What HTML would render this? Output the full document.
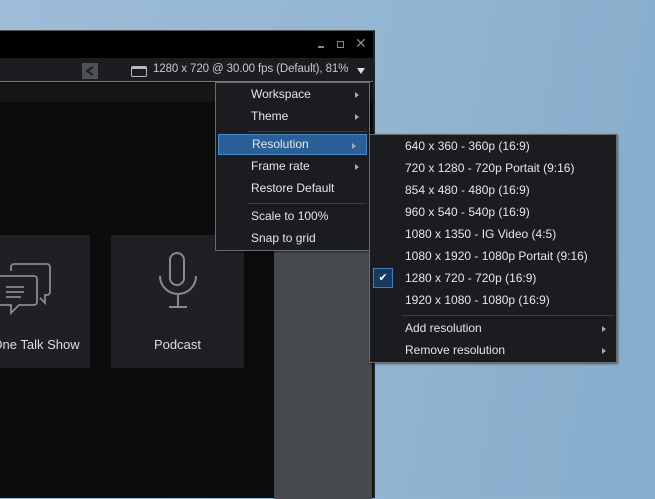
<!DOCTYPE html>
<html><head><style>
*{margin:0;padding:0;box-sizing:border-box}
body{width:655px;height:498px;overflow:hidden;position:relative;background:linear-gradient(100deg,#9dbcd8 0%,#93b6d3 50%,#86adcc 100%);font-family:"Liberation Sans",sans-serif;color:#e6e6e6}
.abs{position:absolute}
.win{left:0;top:30px;width:375px;height:468px;background:#0c0c0d;border-top:1px solid #555;border-right:2px solid #222}
.menu{background:#1b1c1f;border:1px solid #6b6b6b;font-size:12px;box-shadow:1px 1px 2px rgba(0,0,0,.5)}
.it{position:absolute;left:0;right:0;height:22px;line-height:20px}
.arr{position:absolute;right:10px;top:8px;width:0;height:0;border-left:4px solid #aaa;border-top:3.5px solid transparent;border-bottom:3.5px solid transparent}
.sep{position:absolute;height:1px;background:#3c3d40}
</style></head><body>
<div class="abs win">
  <div class="abs" style="left:0;top:0;width:373px;height:27px;background:#000"></div>
  <div class="abs" style="left:318px;top:15px;width:6px;height:2px;background:#888"></div>
  <div class="abs" style="left:337px;top:10px;width:7px;height:7px;border:1.5px solid #888"></div>
  <div class="abs" style="left:355px;top:4px;color:#888;font-size:14px">✕</div>
  <div class="abs" style="left:0;top:27px;width:373px;height:24px;background:#1c1d20;border-bottom:1px solid #4a88c0"></div>
  <div class="abs" style="left:82px;top:32px;width:16px;height:16px;background:#4e5257"></div>
  <svg class="abs" style="left:82px;top:32px" width="16" height="16"><path d="M11 4L5 8L11 12" stroke="#1c1d20" stroke-width="2" fill="none"/></svg>
  <div class="abs" style="left:131px;top:35px;width:16px;height:11px;border:1.5px solid #bbb;border-top-width:3px;border-radius:2px"></div>
  <div class="abs" style="left:153px;top:32px;font-size:11.5px;color:#c8c8c8;letter-spacing:-0.1px">1280 x 720 @ 30.00 fps (Default), 81%</div>
  <div class="abs" style="left:357px;top:37px;border-top:6px solid #ddd;border-left:4px solid transparent;border-right:4px solid transparent"></div>
  <div class="abs" style="left:0;top:52px;width:373px;height:19px;background:#161617"></div>
  <div class="abs" style="left:0;top:204px;width:90px;height:133px;background:#1e2024"></div>
  <div class="abs" style="left:111px;top:204px;width:133px;height:133px;background:#1e2024"></div>
  <svg class="abs" style="left:0;top:220px" width="60" height="70" fill="none" stroke="#8a8a8a" stroke-width="1.8"><path d="M11 20V16a3 3 0 0 1 3-3h33a3 3 0 0 1 3 3v25a3 3 0 0 1-3 3h-2v8l-5-5"/><path d="M0 25h34a3 3 0 0 1 3 3v23a3 3 0 0 1-3 3H19l-8 8v-8H0"/><path d="M6 36h18M6 41h18M6 46h15"/></svg>
  <div class="abs" style="left:-20px;top:306px;width:112px;text-align:center;font-size:13px;color:#ddd">One Talk Show</div>
  <svg class="abs" style="left:156px;top:219px" width="44" height="64" fill="none" stroke="#8a8a8a" stroke-width="2"><rect x="14" y="3" width="14" height="32" rx="7"/><path d="M4 26a18 18 0 0 0 36 0M22 44v13M13 57h18"/></svg>
  <div class="abs" style="left:111px;top:306px;width:133px;text-align:center;font-size:13px;color:#ddd">Podcast</div>
  <div class="abs" style="left:274px;top:170px;width:98px;height:298px;background:#46494d"></div>
</div>
<div class="abs menu" style="left:215px;top:82px;width:155px;height:169px">
  <div class="it" style="top:1px;padding-left:35px">Workspace<span class="arr"></span></div>
  <div class="it" style="top:23px;padding-left:35px">Theme<span class="arr"></span></div>
  <div class="sep" style="left:32px;right:2px;top:48px"></div>
  <div class="it" style="top:51px;left:2px;right:2px;height:21px;line-height:19px;background:#2a6097;border:1px solid #4a88c8;padding-left:33px">Resolution<span class="arr"></span></div>
  <div class="it" style="top:73px;padding-left:35px">Frame rate<span class="arr"></span></div>
  <div class="it" style="top:95px;padding-left:35px">Restore Default</div>
  <div class="sep" style="left:32px;right:2px;top:120px"></div>
  <div class="it" style="top:123px;padding-left:35px">Scale to 100%</div>
  <div class="it" style="top:145px;padding-left:35px">Snap to grid</div>
</div>
<div class="abs menu" style="left:369px;top:134px;width:248px;height:229px">
  <div class="it" style="top:1px;padding-left:35px">640 x 360 - 360p (16:9)</div>
  <div class="it" style="top:23px;padding-left:35px">720 x 1280 - 720p Portait (9:16)</div>
  <div class="it" style="top:45px;padding-left:35px">854 x 480 - 480p (16:9)</div>
  <div class="it" style="top:67px;padding-left:35px">960 x 540 - 540p (16:9)</div>
  <div class="it" style="top:89px;padding-left:35px">1080 x 1350 - IG Video (4:5)</div>
  <div class="it" style="top:111px;padding-left:35px">1080 x 1920 - 1080p Portait (9:16)</div>
  <div class="abs" style="left:3px;top:133px;width:20px;height:20px;background:#173a5e;border:1px solid #3f7fc0;color:#fff;font-size:11px;text-align:center;line-height:18px">✔</div>
  <div class="it" style="top:133px;padding-left:35px">1280 x 720 - 720p (16:9)</div>
  <div class="it" style="top:155px;padding-left:35px">1920 x 1080 - 1080p (16:9)</div>
  <div class="sep" style="left:32px;right:2px;top:180px"></div>
  <div class="it" style="top:183px;padding-left:35px">Add resolution<span class="arr"></span></div>
  <div class="it" style="top:205px;padding-left:35px">Remove resolution<span class="arr"></span></div>
</div>
</body></html>
